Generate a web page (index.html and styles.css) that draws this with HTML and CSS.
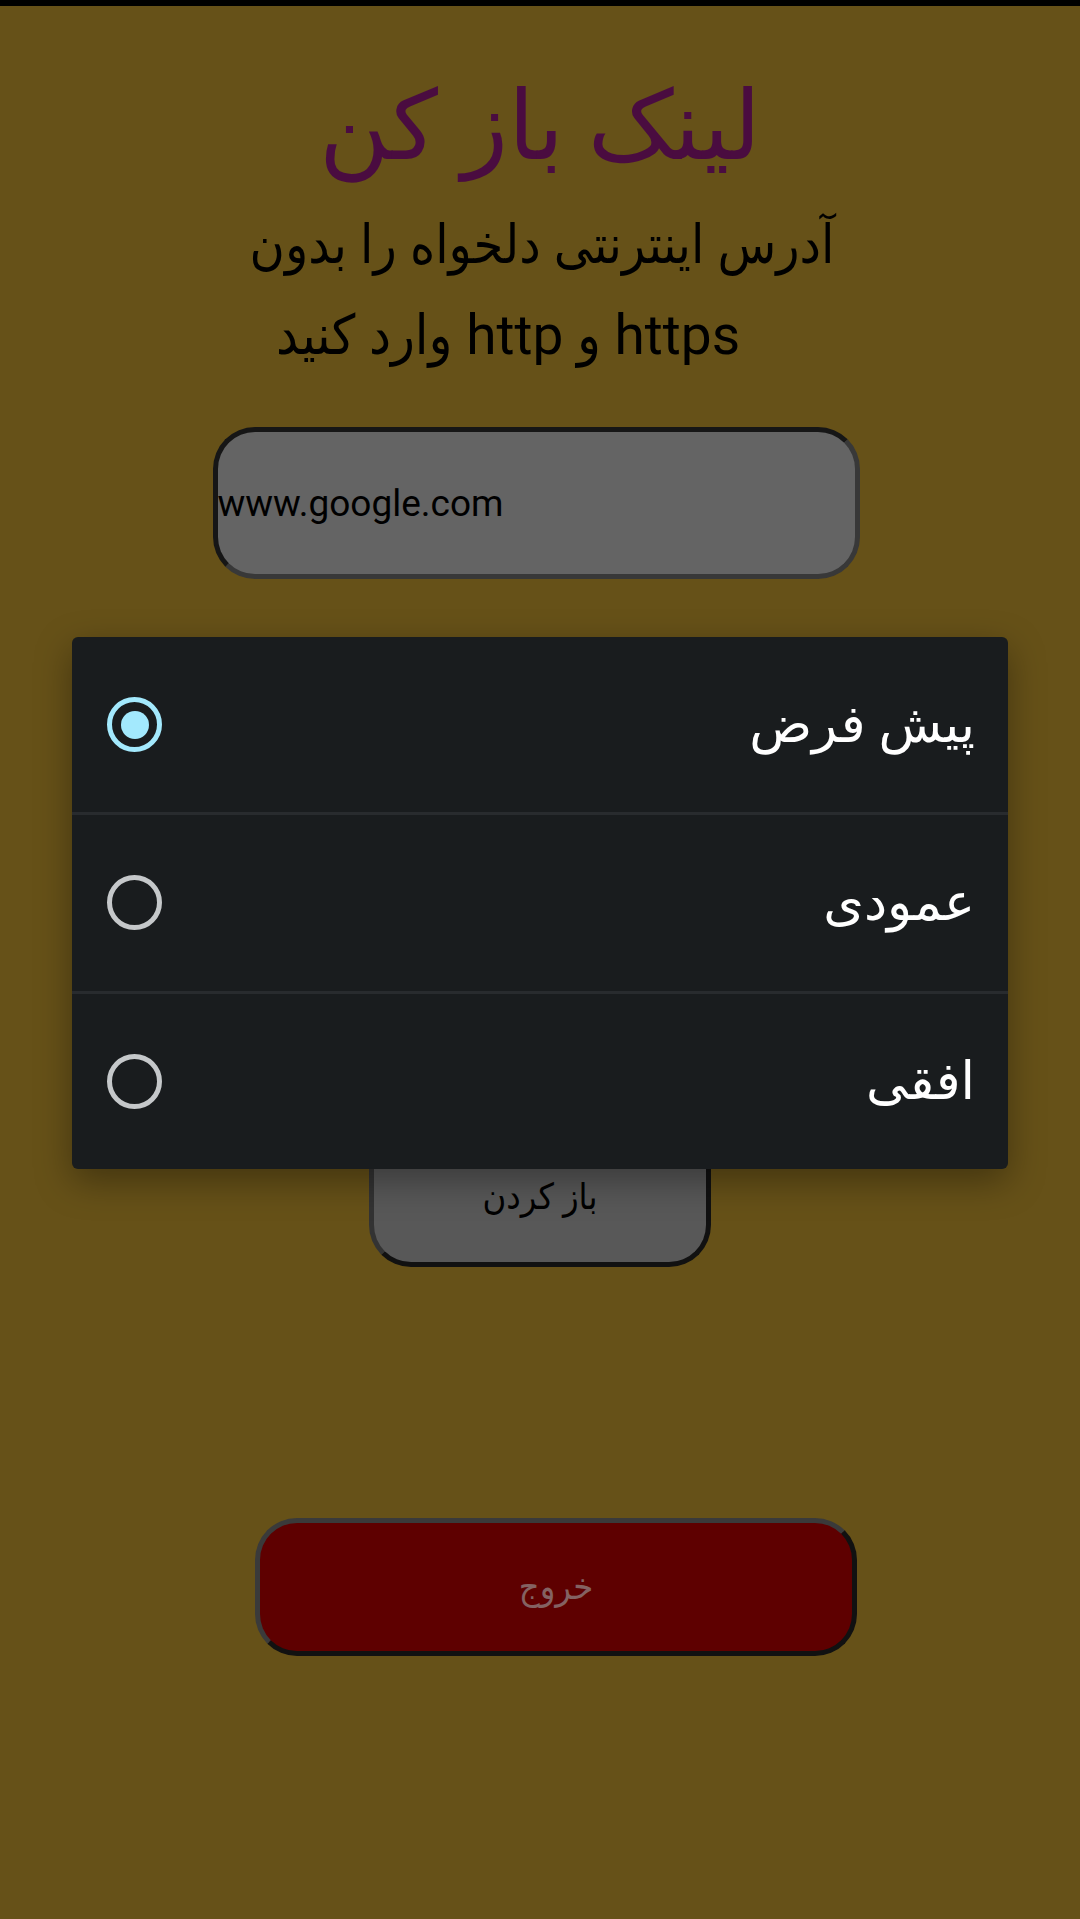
FILE: index.html
```html
<!DOCTYPE html>
<html lang="fa">
<head>
<meta charset="utf-8">
<title>لینک باز کن</title>
<link rel="stylesheet" href="styles.css">
</head>
<body>
<div class="topbar"></div>
<main class="screen">
  <h1 class="title" dir="rtl">لینک باز کن</h1>
  <p class="subtitle" dir="rtl">
    <span class="line line1">آدرس اینترنتی دلخواه را بدون</span>
    <span class="line line2">https و http وارد کنید</span>
  </p>
  <div class="url-field">www.google.com</div>
  <div class="btn btn-open" dir="rtl">باز کردن</div>
  <div class="btn btn-exit" dir="rtl">خروج</div>
</main>
<div class="dialog" dir="rtl">
  <div class="option">
    <span class="label">پیش فرض</span>
    <span class="radio checked"><span class="dot"></span></span>
  </div>
  <div class="option">
    <span class="label">عمودی</span>
    <span class="radio"></span>
  </div>
  <div class="option">
    <span class="label">افقی</span>
    <span class="radio"></span>
  </div>
</div>
</body>
</html>
```
FILE: styles.css
```css
html, body {
  margin: 0;
  padding: 0;
}
body {
  width: 1080px;
  height: 1919px;
  background: #665118;
  font-family: Roboto, "DejaVu Sans", sans-serif;
  position: relative;
  overflow: hidden;
}
.topbar {
  height: 6px;
  background: #000;
}
.screen {
  display: flex;
  flex-direction: column;
  align-items: center;
}
.title {
  margin: 63px 0 0;
  font-size: 96px;
  line-height: 115px;
  font-weight: normal;
  color: #4a0c40;
}
.subtitle {
  margin: 16px 0 0;
  font-family: Roboto, "DejaVu Sans Condensed", "DejaVu Sans", sans-serif;
  font-size: 55px;
  line-height: 90px;
  color: #000;
  text-align: center;
}
.line {
  display: block;
}
.line1 {
  font-size: 53.5px;
  padding-left: 4px;
}
.line2 {
  padding-right: 64px;
}
.url-field {
  box-sizing: border-box;
  margin-top: 47px;
  margin-right: 8px;
  width: 647px;
  height: 152px;
  border: 5px solid;
  border-color: #161616 #383838 #383838 #161616;
  border-radius: 42px;
  background: #646464;
  color: #000;
  font-size: 37px;
  display: flex;
  align-items: center;
  padding: 0;
}
.btn {
  box-sizing: border-box;
  display: flex;
  align-items: center;
  justify-content: center;
  border: 5px solid;
  border-radius: 42px;
  font-family: Roboto, "DejaVu Sans Condensed", "DejaVu Sans", sans-serif;
  font-size: 36px;
}
.btn-open {
  margin-top: 548px;
  width: 342px;
  height: 140px;
  background: #585858;
  border-color: #333 #111 #111 #333;
  color: #000;
}
.btn-exit {
  margin-top: 251px;
  margin-left: 32px;
  width: 602px;
  height: 138px;
  background: #5e0000;
  border-color: #3a3a3a #111 #111 #3a3a3a;
  color: #846262;
}
.dialog {
  position: absolute;
  left: 72px;
  top: 637px;
  width: 936px;
  height: 532px;
  background: #191c1e;
  border-radius: 6px;
  box-shadow: 0 12px 36px rgba(0, 0, 0, 0.35);
  display: flex;
  flex-direction: column;
}
.option {
  flex: 1;
  display: flex;
  align-items: center;
  justify-content: space-between;
  padding: 0 33px 0 35px;
}
.option + .option {
  border-top: 3px solid #282b2e;
}
.label {
  color: #fff;
  font-size: 52px;
}
.radio {
  box-sizing: border-box;
  width: 55px;
  height: 55px;
  border: 5px solid #c5c8ca;
  border-radius: 50%;
  display: flex;
  align-items: center;
  justify-content: center;
}
.radio.checked {
  border-color: #a3e9fd;
}
.dot {
  width: 28px;
  height: 28px;
  border-radius: 50%;
  background: #a3e9fd;
}
```
